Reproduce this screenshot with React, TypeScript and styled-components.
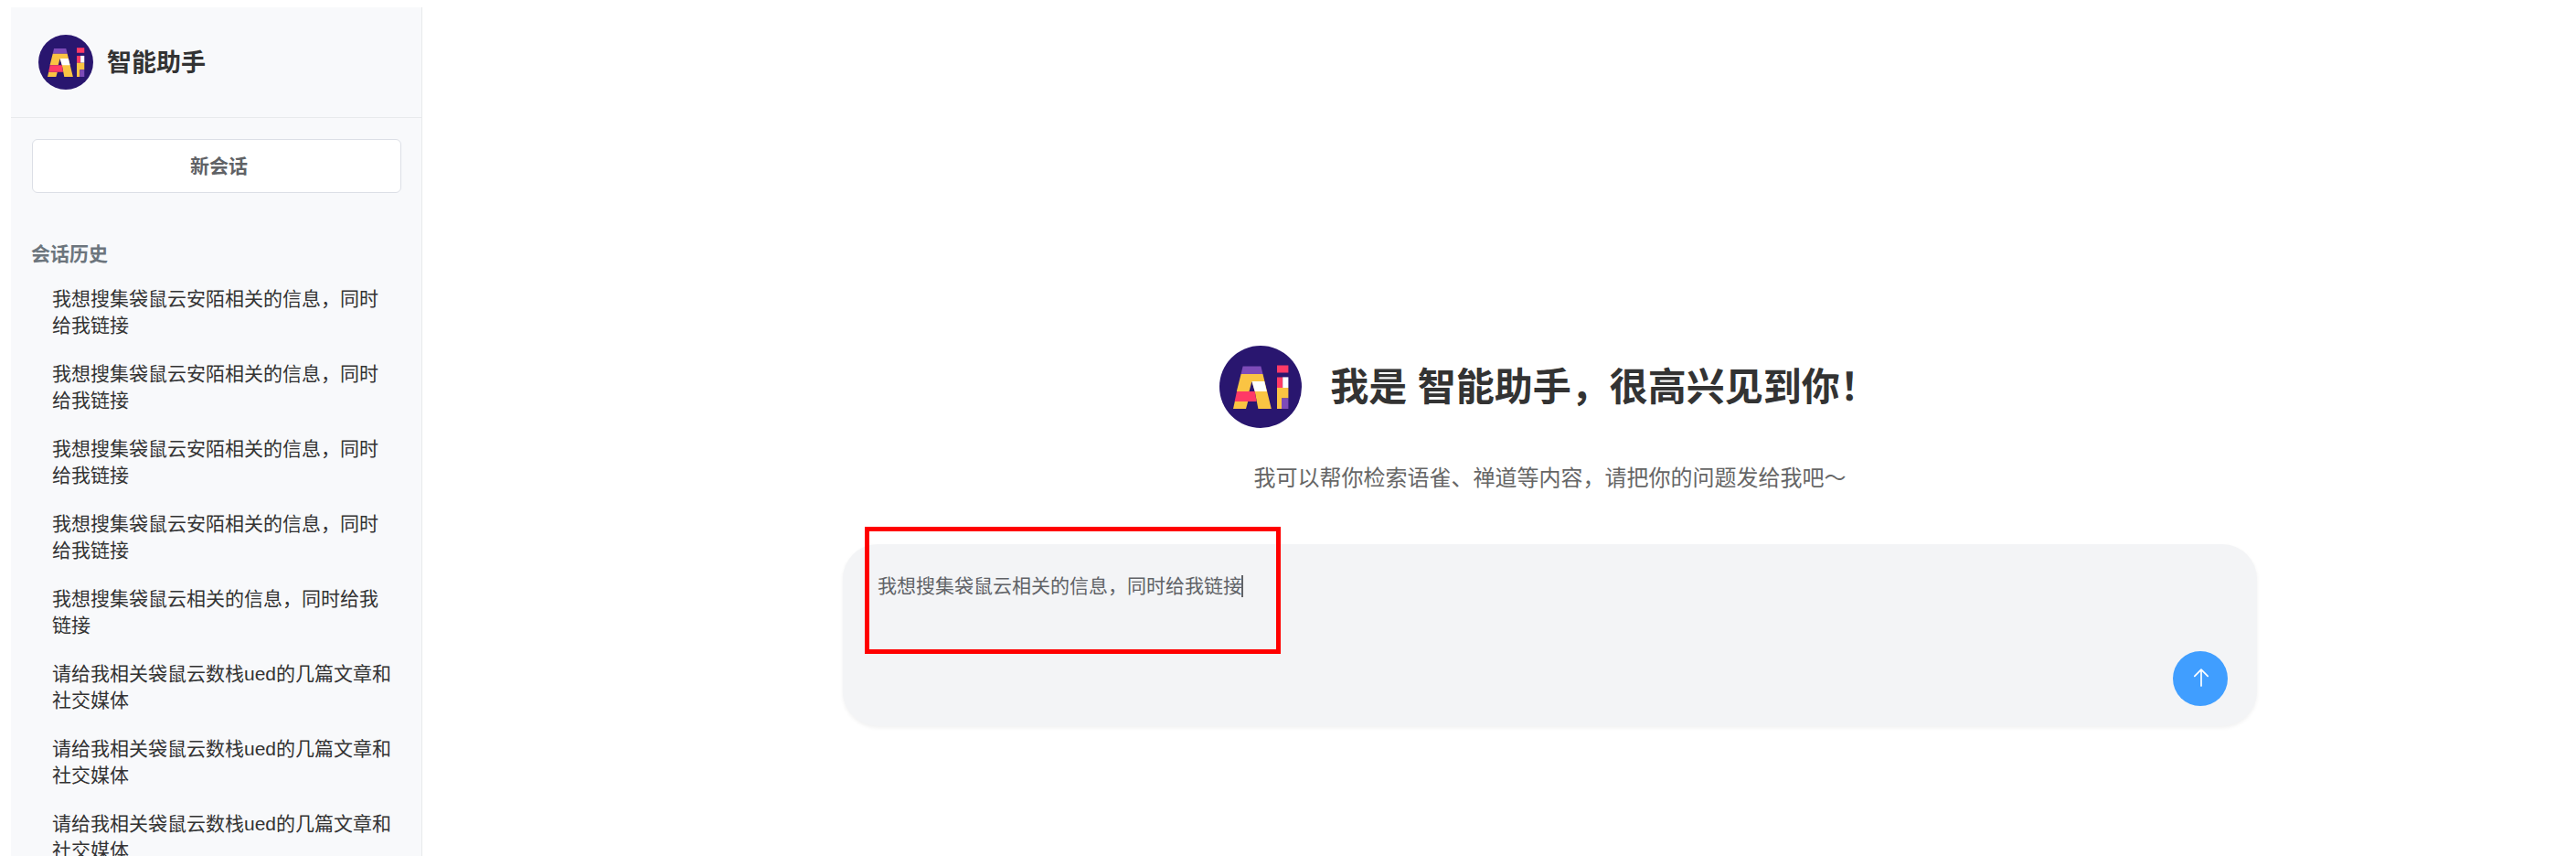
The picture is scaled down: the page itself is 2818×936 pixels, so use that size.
import { useState } from "react";
import styled, { createGlobalStyle } from "styled-components";

const GlobalStyle = createGlobalStyle`
  * { box-sizing: border-box; }
  body {
    margin: 0;
    background: #ffffff;
    color: #333333;
    font-family: "Liberation Sans", "Noto Sans CJK SC", sans-serif;
    font-size: 21px;
    line-height: 29px;
  }
  button, textarea { font: inherit; }
`;

const Page = styled.div`
  display: flex;
  height: 100vh;
  padding: 8px 0 0 12px;
  overflow: hidden;
`;

const Sidebar = styled.aside`
  flex: none;
  display: flex;
  flex-direction: column;
  width: 450px;
  background: #f8f9fb;
  border-right: 1px solid #e8eaec;
  overflow: hidden;
`;

const Brand = styled.header`
  flex: none;
  display: flex;
  align-items: center;
  gap: 15px;
  height: 121px;
  padding: 0 30px;
  border-bottom: 1px solid #e8eaec;
`;

const BrandName = styled.span`
  padding-top: 2px;
  font-size: 27px;
  line-height: 60px;
  font-weight: 700;
`;

const NewChatButton = styled.button`
  flex: none;
  height: 59px;
  margin: 23px 22px 0 23px;
  padding: 0 0 0 5px;
  border: 1px solid #dcdfe6;
  border-radius: 6px;
  background: #ffffff;
  color: #606266;
  font-weight: 700;
  cursor: pointer;
`;

const HistoryTitle = styled.h2`
  flex: none;
  margin: 52px 22px 8px;
  color: #6c757d;
  font-size: 21px;
  line-height: 29px;
  font-weight: 700;
`;

const HistoryList = styled.ul`
  margin: 0;
  padding: 0 28px 0 45px;
  list-style: none;
`;

const HistoryLink = styled.a`
  display: block;
  padding: 12px 0;
  color: inherit;
  text-decoration: none;
`;

const Main = styled.main`
  flex: 1;
  min-width: 0;
  display: flex;
  flex-direction: column;
  align-items: center;
  padding: 370px 349px 0 460px;
`;

const Welcome = styled.div`
  display: flex;
  align-items: center;
  gap: 31px;
  padding-right: 2px;
`;

const Greeting = styled.h1`
  margin: 0;
  padding-top: 2px;
  font-size: 42px;
  line-height: 60px;
  font-weight: 700;
  white-space: nowrap;
`;

const Hint = styled.p`
  margin: 36px 0 54px;
  color: #666666;
  font-size: 24px;
  line-height: 37px;
  white-space: nowrap;
`;

const Composer = styled.form`
  position: relative;
  display: flex;
  flex-direction: column;
  width: 100%;
  height: 199px;
  padding: 31px 32px 22px 38px;
  border-radius: 38px;
  background: #f3f4f6;
  box-shadow: 0 2px 4px rgba(0, 0, 0, 0.06);
`;

const Prompt = styled.textarea`
  flex: 1;
  min-height: 0;
  padding: 0;
  border: 0;
  outline: 0;
  resize: none;
  overflow: hidden;
  background: transparent;
  color: #606266;
  caret-color: transparent;
`;

const Caret = styled.span`
  position: absolute;
  top: 34px;
  left: 436px;
  width: 2px;
  height: 24px;
  background: #606266;
`;

const SendButton = styled.button`
  align-self: flex-end;
  flex: none;
  width: 60px;
  height: 60px;
  padding: 0;
  border: 0;
  border-radius: 50%;
  background: #409eff;
  cursor: pointer;
`;

const Highlight = styled.div`
  position: absolute;
  top: -19px;
  left: 24px;
  width: 455px;
  height: 139px;
  border: 5px solid #ff0000;
  pointer-events: none;
`;

const LogoMark = styled.svg`
  flex: none;
  display: block;
`;

function Logo({ size }: { size: number }) {
  return (
    <LogoMark width={size} height={size} viewBox="0 0 90 90" aria-hidden="true">
      <circle cx="45" cy="45" r="45" fill="#29166f" />
      <path d="M25.6 22.6H45.4L47.5 31H23.6Z" fill="#7d4bb8" />
      <path d="M23.6 31H47.5L56.8 69H42.4L38.7 50L35.5 39L32.5 50H18.8Z" fill="#fac443" />
      <path d="M16.8 61H31.2L29 69H15Z" fill="#fac443" />
      <path d="M35.5 39H49.2L51.8 50H38.7Z" fill="#ffffff" />
      <path d="M19 50H38.7L40.6 61H16.6Z" fill="#ff3a66" />
      <path d="M63 21.4H75.4V29.6H63ZM63 34.4H69.2V46H63Z" fill="#ff3a66" />
      <path d="M69.2 34.4H75.4V46H69.2Z" fill="#ffffff" />
      <path d="M63 46H75.4V57.4H68V69H63Z" fill="#fac443" />
      <path d="M68 57.4H75.4V69H68Z" fill="#7d4bb8" />
    </LogoMark>
  );
}

const ANMO = "我想搜集袋鼠云安陌相关的信息，同时给我链接";
const DTSTACK = "我想搜集袋鼠云相关的信息，同时给我链接";
const ARTICLES = "请给我相关袋鼠云数栈ued的几篇文章和社交媒体";

const sessions = [ANMO, ANMO, ANMO, ANMO, DTSTACK, ARTICLES, ARTICLES, ARTICLES];

export default function App() {
  const [prompt, setPrompt] = useState(DTSTACK);

  return (
    <>
      <GlobalStyle />
      <Page lang="zh-CN">
        <Sidebar>
          <Brand>
            <Logo size={60} />
            <BrandName>智能助手</BrandName>
          </Brand>
          <NewChatButton type="button">新会话</NewChatButton>
          <HistoryTitle>会话历史</HistoryTitle>
          <HistoryList>
            {sessions.map((title, index) => (
              <li key={index}>
                <HistoryLink href="#">{title}</HistoryLink>
              </li>
            ))}
          </HistoryList>
        </Sidebar>
        <Main>
          <Welcome>
            <Logo size={90} />
            <Greeting>我是 智能助手，很高兴见到你！</Greeting>
          </Welcome>
          <Hint>我可以帮你检索语雀、禅道等内容，请把你的问题发给我吧～</Hint>
          <Composer onSubmit={(event) => event.preventDefault()}>
            <Prompt
              aria-label="输入问题"
              value={prompt}
              onChange={(event) => setPrompt(event.target.value)}
            />
            {prompt === DTSTACK && <Caret />}
            <SendButton type="submit" aria-label="发送">
              <svg width="60" height="60" viewBox="0 0 60 60" fill="none" aria-hidden="true">
                <path
                  d="M31 38V20M23.8 27.4L31 20.2L38.2 27.4"
                  stroke="#ffffff"
                  strokeWidth="1.7"
                  strokeLinecap="round"
                  strokeLinejoin="round"
                />
              </svg>
            </SendButton>
            <Highlight />
          </Composer>
        </Main>
      </Page>
    </>
  );
}
